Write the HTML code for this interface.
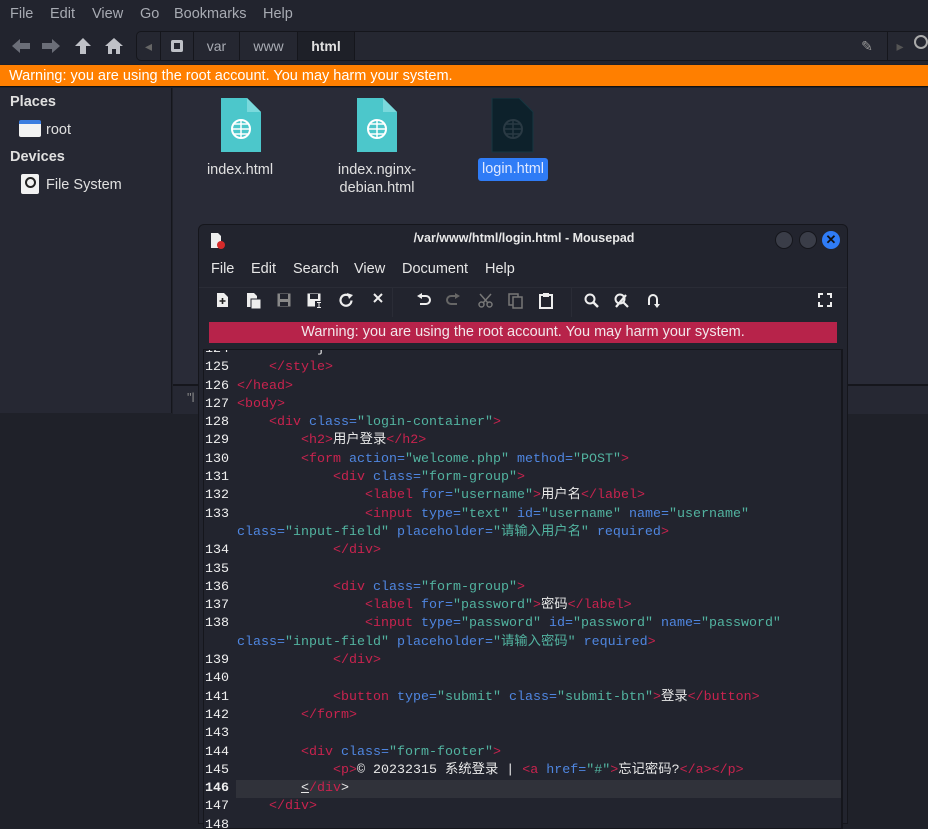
<!DOCTYPE html>
<html><head><meta charset="utf-8">
<style>
*{margin:0;padding:0;box-sizing:border-box}
body{width:928px;height:822px;overflow:hidden;background:#1f2129;font-family:"Liberation Sans","Noto Sans CJK SC",sans-serif;position:relative;color:#d8d8d8}
.abs{position:absolute}
.menu span{margin-right:0;position:absolute;top:6px;font-size:14.5px;color:#a8abb3}
.fm-top{left:0;top:0;width:928px;height:64px;background:#22242e}
.crumb{left:136px;top:31px;width:800px;height:30px;border:1px solid #15161c;border-radius:5px;background:#252731}
.crumb div{position:absolute;top:0;height:28px;border-right:1px solid #15161c;font-size:14px;line-height:28px;color:#a8abb3;text-align:center}
.warn1{left:0;top:65px;width:928px;height:22px;background:#ff7f00;color:#fff;font-size:14.5px;line-height:22px;padding-left:9px;border-bottom:1px solid #111}
.side{left:0;top:88px;width:172px;height:325px;background:#262833;border-right:1px solid #15161c}
.main{left:173px;top:88px;width:755px;height:296px;background:#292b37}
.status{left:173px;top:384px;width:755px;height:30px;background:#262833;border-top:2px solid #15161c}
.side b{position:absolute;font-size:14.5px;color:#e0e0e0}
.side span{position:absolute;font-size:14.5px;color:#e0e0e0}
.fname{position:absolute;font-size:14.5px;color:#e0e0e0;text-align:center;line-height:18px}
.ed{left:198px;top:224px;width:650px;height:600px;background:#22242e;border:1px solid #15161c;border-radius:6px 6px 0 0}
.edm span{position:absolute;top:36px;font-size:14.5px;color:#e6e6e6}
.warn2{left:10px;top:97px;width:628px;height:21px;background:#b7234a;color:#f2e6ea;font-size:14.5px;line-height:21px;text-align:center}
.txt{left:4px;top:124px;width:640px;height:480px;border:1px solid #15161c;overflow:hidden;background:#22242e}
pre{position:absolute;left:1px;top:-9px;font-family:"Liberation Mono","Noto Sans CJK SC",monospace;font-size:13.33px;line-height:18.3px;color:#e8e8e8}
.n{color:#f0f0f0}
.t{color:#c8234e}
.a{color:#4f86e0}
.s{color:#52b3a0}
.cur{position:absolute;left:32px;width:606px;height:18.3px;background:#30323a}
.tb svg{position:absolute;top:68px}
</style></head><body>
<div class="abs fm-top"></div>
<div class="menu"><span style="left:10px">File</span><span style="left:50px">Edit</span><span style="left:92px">View</span><span style="left:140px">Go</span><span style="left:174px">Bookmarks</span><span style="left:263px">Help</span></div>
<svg class="abs" style="left:10px;top:36px" width="115" height="20" viewBox="0 0 115 20">
<path d="M2 10 L10 3 L10 7 L20 7 L20 13 L10 13 L10 17Z" fill="#6b6e78"/>
<path d="M50 10 L42 3 L42 7 L32 7 L32 13 L42 13 L42 17Z" fill="#6b6e78"/>
<path d="M73 2 L81 10 L76 10 L76 18 L70 18 L70 10 L65 10Z" fill="#bfc1c7"/>
<path d="M104 2 L95 10 L98 10 L98 18 L102 18 L102 13 L106 13 L106 18 L110 18 L110 10 L113 10Z" fill="#bfc1c7"/>
</svg>
<div class="abs crumb">
<div style="left:0;width:24px;color:#666">◂</div>
<div style="left:24px;width:33px"><span style="display:inline-block;width:12px;height:12px;background:#bfc1c7;border-radius:2px;margin-top:8px;box-shadow:inset 0 0 0 3px #bfc1c7,inset 0 0 0 6px #252731"></span></div>
<div style="left:57px;width:46px">var</div>
<div style="left:103px;width:58px">www</div>
<div style="left:161px;width:57px;background:#1e2028;color:#e0e0e0;font-weight:bold">html</div>
<div style="left:710px;width:41px;border-right:1px solid #15161c;color:#999">✎</div>
<div style="left:751px;width:24px;border:none;color:#555">▸</div>
</div>
<div class="abs" style="left:914px;top:35px;width:14px;height:14px;border:2px solid #aaa;border-radius:50%"></div>
<div class="abs warn1">Warning: you are using the root account. You may harm your system.</div>
<div class="abs side">
<b style="left:10px;top:6px">Places</b>
<div class="abs" style="left:19px;top:32px;width:22px;height:17px;background:#f2f2f2;border-top:4px solid #3b7de0;border-radius:2px"></div>
<span style="left:46px;top:34px">root</span>
<b style="left:10px;top:61px">Devices</b>
<div class="abs" style="left:21px;top:86px;width:18px;height:20px;background:#f2f2f2;border-radius:2px"><div style="margin:3px auto;width:11px;height:11px;border:2px solid #222;border-radius:50%"></div></div>
<span style="left:46px;top:89px">File System</span>
</div>
<div class="abs main"></div>
<div class="abs status"><span style="position:absolute;left:14px;top:4px;font-size:13px;color:#888">"l</span></div>
<svg class="abs" style="left:219px;top:98px" width="44" height="56"><path d="M2 0 H28 L42 14 V54 H2Z" fill="#4cc7cb" rx="3"/><path d="M28 0 V14 H42Z" fill="#7ad9dc"/><circle cx="22" cy="31" r="9" fill="none" stroke="#fff" stroke-width="2"/><path d="M13 31H31M22 22V40M15 26H29M15 36H29" stroke="#fff" stroke-width="1.5"/></svg>
<div class="fname" style="left:190px;top:161px;width:100px">index.html</div>
<svg class="abs" style="left:355px;top:98px" width="44" height="56"><path d="M2 0 H28 L42 14 V54 H2Z" fill="#4cc7cb"/><path d="M28 0 V14 H42Z" fill="#7ad9dc"/><circle cx="22" cy="31" r="9" fill="none" stroke="#fff" stroke-width="2"/><path d="M13 31H31M22 22V40M15 26H29M15 36H29" stroke="#fff" stroke-width="1.5"/></svg>
<div class="fname" style="left:327px;top:161px;width:100px">index.nginx-<br>debian.html</div>
<svg class="abs" style="left:491px;top:98px" width="44" height="56"><path d="M1 0 H28 L42 14 V54 H1Z" fill="#0d212b" stroke="#163640"/><circle cx="22" cy="31" r="9" fill="none" stroke="#2a3a44" stroke-width="2"/><path d="M13 31H31M22 22V40M15 26H29M15 36H29" stroke="#2a3a44" stroke-width="1.5"/></svg>
<div class="fname" style="left:478px;top:158px;width:70px;height:23px;line-height:23px;background:#2f7cf6;border-radius:3px;color:#dfe8ff">login.html</div>

<div class="abs ed">
<svg class="abs" style="left:11px;top:8px" width="16" height="16"><path d="M1 0H8L11 3V15H1Z" fill="#eee"/><circle cx="11" cy="12" r="4" fill="#d52a2a"/></svg>
<div class="abs" style="left:0;top:6px;width:650px;text-align:center;font-size:12.5px;font-weight:bold;color:#e8e8e8">/var/www/html/login.html - Mousepad</div>
<div class="abs" style="left:576px;top:6px;width:18px;height:18px;border-radius:50%;background:#3a3d48;border:1px solid #15161c"></div>
<div class="abs" style="left:600px;top:6px;width:18px;height:18px;border-radius:50%;background:#3a3d48;border:1px solid #15161c"></div>
<div class="abs" style="left:623px;top:6px;width:18px;height:18px;border-radius:50%;background:#2f7cf6;color:#111;font-size:13px;font-weight:bold;text-align:center;line-height:18px">✕</div>
<div class="edm"><span style="left:12px">File</span><span style="left:52px">Edit</span><span style="left:94px">Search</span><span style="left:155px">View</span><span style="left:203px">Document</span><span style="left:286px">Help</span></div>
<div class="abs" style="left:0;top:62px;width:648px;height:1px;background:#2a2c36"></div>
<div class="tb">
<svg style="left:17px" width="14" height="14"><path d="M1 0H8L12 4V14H1Z" fill="#eee"/><path d="M6.5 5V11M3.5 8H9.5" stroke="#222" stroke-width="1.6"/></svg>
<svg style="left:47px" width="16" height="16"><path d="M1 0H8L11 3V14H1Z" fill="#eee"/><rect x="5" y="6" width="10" height="10" fill="#eee" stroke="#22242e"/></svg>
<svg style="left:78px" width="14" height="14"><rect x="0.5" y="0.5" width="13" height="13" fill="#888"/><rect x="3" y="1" width="8" height="5" fill="#22242e"/><rect x="3" y="9" width="8" height="4" fill="#22242e"/></svg>
<svg style="left:108px" width="16" height="16"><rect x="0.5" y="0.5" width="13" height="13" fill="#eee"/><rect x="3" y="1" width="8" height="5" fill="#22242e"/><rect x="8" y="8" width="8" height="8" fill="#22242e"/><path d="M10 9.5H14M12 9.5V14.5M10 14.5H14" stroke="#eee"/></svg>
<svg style="left:140px" width="15" height="15"><path d="M12.5 7.5A5.5 5.5 0 1 1 10.5 3" fill="none" stroke="#eee" stroke-width="2.2"/><path d="M8 0L14 2L10 6Z" fill="#eee"/></svg>
<svg style="left:174px" width="10" height="10" viewBox="0 0 10 10"><path d="M1 1L9 9M9 1L1 9" stroke="#eee" stroke-width="2"/></svg>
<svg style="left:218px" width="14" height="14"><path d="M4 3H9A4 4 0 0 1 9 11H3" fill="none" stroke="#eee" stroke-width="2"/><path d="M0 3L5 0V6Z" fill="#eee"/></svg>
<svg style="left:247px" width="14" height="14"><path d="M10 3H5A4 4 0 0 0 5 11H11" fill="none" stroke="#666" stroke-width="2"/><path d="M14 3L9 0V6Z" fill="#666"/></svg>
<svg style="left:279px" width="15" height="15"><circle cx="3.5" cy="11.5" r="2.5" fill="none" stroke="#777" stroke-width="1.5"/><circle cx="11.5" cy="11.5" r="2.5" fill="none" stroke="#777" stroke-width="1.5"/><path d="M5 10L13 1M10 10L2 1" stroke="#777" stroke-width="1.5"/></svg>
<svg style="left:309px" width="15" height="16"><rect x="1" y="1" width="9" height="11" fill="none" stroke="#777" stroke-width="1.5"/><rect x="5" y="4" width="9" height="11" fill="#22242e" stroke="#777" stroke-width="1.5"/></svg>
<svg style="left:340px" width="14" height="16"><rect x="1" y="2" width="12" height="13" fill="none" stroke="#eee" stroke-width="2"/><rect x="4" y="0" width="6" height="4" fill="#eee"/></svg>
<svg style="left:385px" width="15" height="15"><circle cx="6" cy="6" r="4.5" fill="none" stroke="#eee" stroke-width="2"/><path d="M9 9L14 14" stroke="#eee" stroke-width="2.5"/></svg>
<svg style="left:415px" width="16" height="16"><circle cx="6" cy="6" r="4.5" fill="none" stroke="#eee" stroke-width="2"/><path d="M9 9L14 14M2 14L12 2" stroke="#eee" stroke-width="2.2"/></svg>
<svg style="left:447px" width="14" height="16"><path d="M3 12V6A4 4 0 0 1 11 6V12" fill="none" stroke="#eee" stroke-width="2"/><path d="M8 11H14L11 15Z" fill="#eee"/></svg>
<svg style="left:619px" width="14" height="14"><path d="M1 5V1H5M9 1H13V5M13 9V13H9M5 13H1V9" fill="none" stroke="#eee" stroke-width="2"/></svg>
</div>
<div class="abs" style="left:193px;top:62px;width:1px;height:30px;background:#2a2c36"></div>
<div class="abs" style="left:372px;top:62px;width:1px;height:30px;background:#2a2c36"></div>
<div class="abs warn2">Warning: you are using the root account. You may harm your system.</div>
<div class="abs txt">
<div class="cur" style="top:430px"></div>
<div class="abs" style="left:637px;top:0;width:1px;height:480px;background:#15161c"></div>
<pre><span class="n">124</span>           }
<span class="n">125</span>     <span class="t">&lt;/style&gt;</span>
<span class="n">126</span> <span class="t">&lt;/head&gt;</span>
<span class="n">127</span> <span class="t">&lt;body&gt;</span>
<span class="n">128</span>     <span class="t">&lt;div</span> <span class="a">class=</span><span class="s">"login-container"</span><span class="t">&gt;</span>
<span class="n">129</span>         <span class="t">&lt;h2&gt;</span>用户登录<span class="t">&lt;/h2&gt;</span>
<span class="n">130</span>         <span class="t">&lt;form</span> <span class="a">action=</span><span class="s">"welcome.php"</span> <span class="a">method=</span><span class="s">"POST"</span><span class="t">&gt;</span>
<span class="n">131</span>             <span class="t">&lt;div</span> <span class="a">class=</span><span class="s">"form-group"</span><span class="t">&gt;</span>
<span class="n">132</span>                 <span class="t">&lt;label</span> <span class="a">for=</span><span class="s">"username"</span><span class="t">&gt;</span>用户名<span class="t">&lt;/label&gt;</span>
<span class="n">133</span>                 <span class="t">&lt;input</span> <span class="a">type=</span><span class="s">"text"</span> <span class="a">id=</span><span class="s">"username"</span> <span class="a">name=</span><span class="s">"username"</span>
    <span class="a">class=</span><span class="s">"input-field"</span> <span class="a">placeholder=</span><span class="s">"请输入用户名"</span> <span class="a">required</span><span class="t">&gt;</span>
<span class="n">134</span>             <span class="t">&lt;/div&gt;</span>
<span class="n">135</span>
<span class="n">136</span>             <span class="t">&lt;div</span> <span class="a">class=</span><span class="s">"form-group"</span><span class="t">&gt;</span>
<span class="n">137</span>                 <span class="t">&lt;label</span> <span class="a">for=</span><span class="s">"password"</span><span class="t">&gt;</span>密码<span class="t">&lt;/label&gt;</span>
<span class="n">138</span>                 <span class="t">&lt;input</span> <span class="a">type=</span><span class="s">"password"</span> <span class="a">id=</span><span class="s">"password"</span> <span class="a">name=</span><span class="s">"password"</span>
    <span class="a">class=</span><span class="s">"input-field"</span> <span class="a">placeholder=</span><span class="s">"请输入密码"</span> <span class="a">required</span><span class="t">&gt;</span>
<span class="n">139</span>             <span class="t">&lt;/div&gt;</span>
<span class="n">140</span>
<span class="n">141</span>             <span class="t">&lt;button</span> <span class="a">type=</span><span class="s">"submit"</span> <span class="a">class=</span><span class="s">"submit-btn"</span><span class="t">&gt;</span>登录<span class="t">&lt;/button&gt;</span>
<span class="n">142</span>         <span class="t">&lt;/form&gt;</span>
<span class="n">143</span>
<span class="n">144</span>         <span class="t">&lt;div</span> <span class="a">class=</span><span class="s">"form-footer"</span><span class="t">&gt;</span>
<span class="n">145</span>             <span class="t">&lt;p&gt;</span>© 20232315 系统登录 | <span class="t">&lt;a</span> <span class="a">href=</span><span class="s">"#"</span><span class="t">&gt;</span>忘记密码?<span class="t">&lt;/a&gt;&lt;/p&gt;</span>
<b class="n">146</b>         <span style="text-decoration:underline">&lt;</span><span class="t">/div</span><span>&gt;</span>
<span class="n">147</span>     <span class="t">&lt;/div&gt;</span>
<span class="n">148</span></pre>
</div>
</div>
</body></html>
